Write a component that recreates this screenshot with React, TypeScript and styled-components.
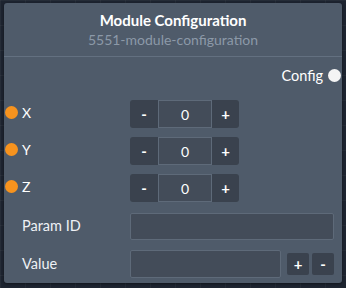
import React from "react";
import styled, { createGlobalStyle } from "styled-components";

const Global = createGlobalStyle`
  html, body { margin: 0; padding: 0; }
  body {
    background-color: #1d2430;
    background-image:
      linear-gradient(rgba(255,255,255,0.035) 1px, transparent 1px),
      linear-gradient(90deg, rgba(255,255,255,0.035) 1px, transparent 1px);
    background-size: 25px 25px;
    font-family: "Lato", "Noto Sans", sans-serif;
    width: 346px;
    height: 288px;
    overflow: hidden;
  }
`;

const Card = styled.div`
  margin: 3px 4px 0 4px;
  width: 338px;
  height: 280px;
  box-sizing: border-box;
  background: #4f5b6a;
  border-radius: 3px;
  box-shadow: 0 1px 3px rgba(0,0,0,0.45);
  display: flex;
  flex-direction: column;
`;

const Header = styled.div`
  padding: 9px 0 8px;
  border-bottom: 1px solid #637080;
  display: flex;
  flex-direction: column;
  align-items: center;
  gap: 3px;
`;

const Title = styled.div`
  color: #ffffff;
  font-weight: 700;
  font-size: 15px;
  line-height: 17px;
`;

const Subtitle = styled.div`
  color: #8c99a8;
  font-size: 14px;
  line-height: 16px;
`;

const Body = styled.div`
  padding: 10px 8px 0 1px;
  display: flex;
  flex-direction: column;
`;

const OutputRow = styled.div`
  display: flex;
  justify-content: flex-end;
  align-items: center;
  gap: 5px;
  height: 16px;
  margin-right: -7px;
  margin-bottom: 17px;
`;

const OutLabel = styled.span`
  color: #ffffff;
  font-size: 14.5px;
`;

const Dot = styled.span<{ $color: string }>`
  width: 13px;
  height: 13px;
  border-radius: 50%;
  background: ${(p) => p.$color};
  flex: none;
`;

const Row = styled.div<{ $mt?: number }>`
  display: grid;
  grid-template-columns: 125px 1fr;
  align-items: center;
  margin-top: ${(p) => p.$mt ?? 0}px;
`;

const LabelCell = styled.div`
  display: flex;
  align-items: center;
  gap: 4px;
  color: #ffffff;
  font-size: 14px;
  margin-top: -3px;
`;

const PlainLabel = styled.div`
  padding-left: 17px;
  color: #eef1f5;
  font-size: 14.5px;
  margin-top: -2px;
`;

const Stepper = styled.div`
  display: flex;
  height: 28px;
`;

const StepBtn = styled.button<{ $w: number }>`
  width: ${(p) => p.$w}px;
  height: 28px;
  border: none;
  background: #3a424e;
  color: #ffffff;
  font-family: "Lato", sans-serif;
  font-weight: 700;
  font-size: 15px;
  padding: 0;
  border-radius: ${(p) => (p.$w === 28 ? "3px 0 0 3px" : "0 3px 3px 0")};
  display: flex;
  align-items: center;
  justify-content: center;
`;

const StepInput = styled.input`
  width: 54px;
  height: 28px;
  box-sizing: border-box;
  border: 1px solid #5e6a79;
  background: #434c59;
  color: #ffffff;
  text-align: center;
  font-family: "Lato", sans-serif;
  font-size: 14px;
  padding: 0;
  outline: none;
`;

const TextInput = styled.input<{ $w?: number; $h?: number }>`
  width: ${(p) => (p.$w ? `${p.$w}px` : "100%")};
  height: ${(p) => p.$h ?? 27}px;
  box-sizing: border-box;
  border: 1px solid #5e6a79;
  border-radius: 2px;
  background: #434c59;
  color: #ffffff;
  font-family: "Lato", sans-serif;
  font-size: 13px;
  outline: none;
`;

const ValueControls = styled.div`
  display: flex;
  align-items: center;
`;

const SmallBtn = styled.button<{ $ml: number }>`
  width: 22px;
  height: 22px;
  margin-left: ${(p) => p.$ml}px;
  border: none;
  border-radius: 2px;
  background: #3a424e;
  color: #ffffff;
  font-family: "Lato", sans-serif;
  font-weight: 700;
  font-size: 15px;
  padding: 0;
  display: flex;
  align-items: center;
  justify-content: center;
`;

const axes = ["X", "Y", "Z"];

export default function App() {
  return (
    <>
      <Global />
      <Card>
        <Header>
          <Title>Module Configuration</Title>
          <Subtitle>5551-module-configuration</Subtitle>
        </Header>
        <Body>
          <OutputRow>
            <OutLabel>Config</OutLabel>
            <Dot $color="#f4f4f4" />
          </OutputRow>
          {axes.map((a, i) => (
            <Row key={a} $mt={i === 0 ? 0 : 9}>
              <LabelCell>
                <Dot $color="#f7931e" />
                {a}
              </LabelCell>
              <Stepper>
                <StepBtn $w={28}>-</StepBtn>
                <StepInput defaultValue="0" />
                <StepBtn $w={27}>+</StepBtn>
              </Stepper>
            </Row>
          ))}
          <Row $mt={11}>
            <PlainLabel>Param ID</PlainLabel>
            <TextInput />
          </Row>
          <Row $mt={10}>
            <PlainLabel>Value</PlainLabel>
            <ValueControls>
              <TextInput $w={151} $h={28} />
              <SmallBtn $ml={6}>+</SmallBtn>
              <SmallBtn $ml={3}>-</SmallBtn>
            </ValueControls>
          </Row>
        </Body>
      </Card>
    </>
  );
}
